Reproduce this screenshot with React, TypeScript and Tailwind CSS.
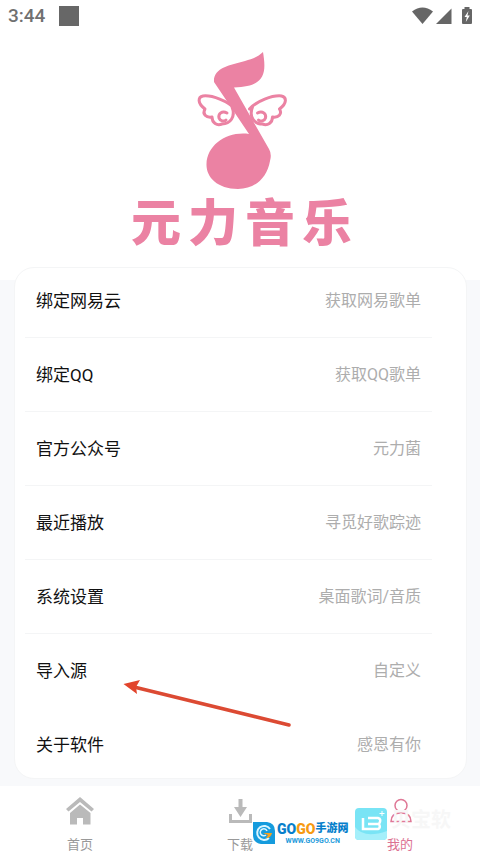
import React from "react";

const rows = [
  { label: "绑定网易云", hint: "获取网易歌单" },
  { label: "绑定QQ", hint: "获取QQ歌单" },
  { label: "官方公众号", hint: "元力菌" },
  { label: "最近播放", hint: "寻觅好歌踪迹" },
  { label: "系统设置", hint: "桌面歌词/音质" },
  { label: "导入源", hint: "自定义" },
  { label: "关于软件", hint: "感恩有你" },
];

function StatusBar() {
  return (
    <div className="flex h-8 items-center justify-between pr-1 pl-2">
      <div className="flex items-center gap-[14px]">
        <span className="text-[19px] leading-6 font-medium text-[#707070]">3:44</span>
        <span className="size-5 bg-[#676767]" />
      </div>
      <svg className="h-6 w-16" viewBox="412 4 64 24" fill="#666" aria-hidden="true">
        <path d="M412 11.5Q422.500 3.500 433 11.500L422.500 24Z" />
        <path d="M451.500 8.500V24H436Z" />
        <path d="M464.500 7H469.500V9H471Q472 9 472 10V23Q472 24 471 24H463Q462 24 462 23V10Q462 9 463 9H464.500Z" />
        <path d="M468.500 11L464.500 17H466.800L465.800 22L469.800 15.500H467.400Z" fill="#fff" />
      </svg>
    </div>
  );
}

function Wing() {
  return (
    <>
      <path d="M235 109C228 101 212 95 203 96C198 97 197 103 205 109C202 114 206 118 212 117C212 123 217 126 222 124C230 124 236 117 232 107" />
      <path d="M227 113C222 110 218 114 219 118C220 121 224 122 226 120" />
    </>
  );
}

function Brand() {
  return (
    <div className="flex h-[248px] flex-col items-center gap-1 pt-5 pl-[3px]">
      <svg className="h-[138px] w-[92px]" viewBox="196 52 92 138" aria-hidden="true">
        <g fill="none" stroke="#eb82a3" strokeWidth="3" strokeLinecap="round" strokeLinejoin="round">
          <Wing />
          <g transform="translate(484.5 0) scale(-1 1)">
            <Wing />
          </g>
        </g>
        <path d="M263 52C266 71 267 87 234 87.500L269 149Q272 154 270 161C267 178 255 189 238 189C217 189 206 177 206.500 164C207 145 227 131 249 134L214 82C213 68 230 65 245 61C252 59 258 57 263 52Z" fill="#eb82a3" />
      </svg>
      <h1 className="flex gap-[7px] text-[50px] leading-[60px] font-black text-[#eb82a3]">
        <span>元</span>
        <span>力</span>
        <span>音</span>
        <span>乐</span>
      </h1>
    </div>
  );
}

function Menu() {
  return (
    <ul className="relative mr-[13px] ml-[14px] -mt-[13px] mb-[7px] rounded-[20px] border border-[#f4f5f6] bg-white pr-[34px] pl-[10px]">
      {rows.map((row, i) => (
        <li key={row.label} className={i < 5 ? "border-b border-[#f4f5f6]" : ""}>
          <button
            type="button"
            className={`flex w-full items-center justify-between px-[11px] text-left ${
              i === 0 ? "pt-[21px] pb-6" : i < 5 ? "pt-[25px] pb-6" : i === 5 ? "py-[25px]" : "pt-[25px] pb-[21px]"
            }`}
          >
            <span className="text-[17px] leading-6 text-[#111]">{row.label}</span>
            <span className="text-base leading-6 text-[#adadad]">{row.hint}</span>
          </button>
        </li>
      ))}
      <li aria-hidden="true" className="absolute bottom-[51px] left-[107px]">
        <svg className="h-12 w-[170px]" viewBox="122 679 170 48">
          <path d="M134 687L289 725" stroke="#dc4a33" strokeWidth="3.500" strokeLinecap="round" />
          <path d="M123.500 684L140 680L136 687L137 694Z" fill="#e2442c" />
        </svg>
      </li>
    </ul>
  );
}

function GogoMark() {
  return (
    <div className="absolute bottom-2 left-[253px] flex items-center gap-[2px]">
      <svg className="size-[22px]" viewBox="0 0 22 22" aria-hidden="true">
        <path d="M0 0H14Q22 1 22 9V22H8Q0 21 0 13Z" fill="#159bdd" />
        <path d="M17 7A7 7 0 1 0 16 16" fill="none" stroke="#d9f5ff" strokeWidth="2" />
        <path d="M14 9A3.500 3.500 0 1 0 13 13" fill="none" stroke="#d9f5ff" strokeWidth="1.500" />
        <path d="M10 11H19Q18 16 13 16L15 13Z" fill="#f9a11b" />
      </svg>
      <div className="flex flex-col items-center">
        <div className="flex items-center text-[14px] leading-4 font-black">
          <span className="text-[#087fcb]">GO</span>
          <span className="text-[#f79a12]">GO</span>
          <span className="text-[11px] text-[#087fcb]">手游网</span>
        </div>
        <span className="text-[7px] leading-[8px] font-bold text-[#249bdb]">WWW.GO9GO.CN</span>
      </div>
    </div>
  );
}

function BabyMark() {
  return (
    <div className="absolute bottom-[13px] left-[355px] flex items-start gap-[4px]">
      <svg className="size-8" viewBox="0 0 32 32" aria-hidden="true">
        <rect width="32" height="32" rx="4" fill="#79e4f5" />
        <path d="M0 19Q9 31 32 23V28Q32 32 28 32H4Q0 32 0 28Z" fill="#a5effa" />
        <path d="M8 10V21H23Q26 20 24 16Q27 11 23 10H13M13 16H23" fill="none" stroke="#fff" strokeWidth="2.500" />
        <path d="M27 3V8M24.500 5.500H29.500" stroke="#fff" />
      </svg>
      <span className="text-xl leading-6 font-bold text-[#f7f7f7]">贝宝软</span>
    </div>
  );
}

function Nav() {
  const item = "flex flex-1 flex-col items-center pt-[11px] text-[13px] leading-4";
  return (
    <nav className="relative flex h-[67px] bg-white">
      <button type="button" className={`${item} text-[#999]`}>
        <svg className="mb-3 h-7 w-7" viewBox="66 797 28 28" fill="#bababa" aria-hidden="true">
          <path d="M80 797L94 809L91.500 811.500L80 802L68.500 811.500L66 809Z" />
          <path d="M80 804.500L90.500 813V824.500H83V818H77V824.500H70V813Z" />
        </svg>
        首页
      </button>
      <button type="button" className={`${item} text-[#999]`}>
        <svg className="mb-3 h-7 w-7" viewBox="226 797 28 28" fill="#bababa" aria-hidden="true">
          <path d="M238.500 799H242.500V807H247L240.500 817L234 807H238.500Z" />
          <path d="M229 814H232V820H249V814H252V823H229Z" />
        </svg>
        下载
      </button>
      <button type="button" className={`${item} text-[#dc7192]`}>
        <svg className="mb-3 h-7 w-7" viewBox="386 797 28 28" fill="none" stroke="#df7896" strokeWidth="1.500" aria-hidden="true">
          <circle cx="401" cy="805.500" r="6" />
          <path d="M391 821.500Q391 813 401 813Q411 813 411 821.500Z" />
        </svg>
        我的
      </button>
      <GogoMark />
      <BabyMark />
    </nav>
  );
}

export default function App() {
  return (
    <main className="min-h-screen bg-[#f8f9fb] font-[Roboto,'Noto_Sans_CJK_SC',sans-serif]">
      <header className="bg-white">
        <StatusBar />
        <Brand />
      </header>
      <Menu />
      <Nav />
    </main>
  );
}
